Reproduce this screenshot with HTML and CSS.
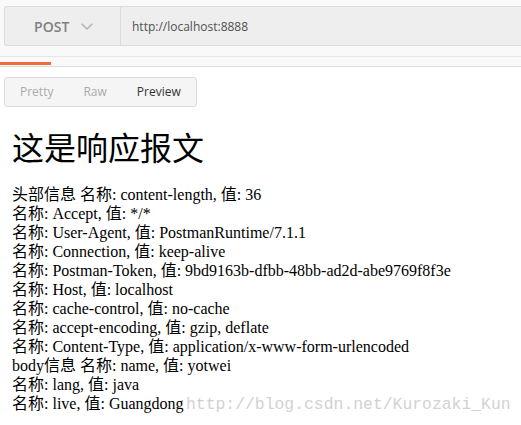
FILE: index.html
```html
<!DOCTYPE html>
<html lang="zh">
<head>
<meta charset="utf-8">
<title>Postman Preview</title>
<link rel="stylesheet" href="styles.css">
</head>
<body>
<div class="app">
  <div class="topbar">
    <div class="reqbar">
      <div class="method">
        <span class="method-name">POST</span>
        <svg class="chev" width="12" height="7" viewBox="0 0 12 7"><path d="M0.7 0.7 L6 6 L11.3 0.7" fill="none" stroke="#b0b0b0" stroke-width="1.3"/></svg>
      </div>
      <div class="url">http://localhost:8888</div>
    </div>
  </div>
  <div class="subbar"></div>
  <div class="tabstrip"><div class="active-line"></div></div>
  <div class="viewtabs">
    <span class="vt">Pretty</span>
    <span class="vt">Raw</span>
    <span class="vt vt-on">Preview</span>
  </div>
  <div class="preview">
    <h1 class="title">这是响应报文</h1>
    <div class="lines">
      <div>头部信息 名称: content-length, 值: 36</div>
      <div>名称: Accept, 值: */*</div>
      <div>名称: User-Agent, 值: PostmanRuntime/7.1.1</div>
      <div>名称: Connection, 值: keep-alive</div>
      <div>名称: Postman-Token, 值: 9bd9163b-dfbb-48bb-ad2d-abe9769f8f3e</div>
      <div>名称: Host, 值: localhost</div>
      <div>名称: cache-control, 值: no-cache</div>
      <div>名称: accept-encoding, 值: gzip, deflate</div>
      <div>名称: Content-Type, 值: application/x-www-form-urlencoded</div>
      <div>body信息 名称: name, 值: yotwei</div>
      <div>名称: lang, 值: java</div>
      <div>名称: live, 值: Guangdong</div>
    </div>
  </div>
  <div class="watermark">http://blog.csdn.net/Kurozaki_Kun</div>
</div>
</body>
</html>
```

FILE: styles.css
```css
html, body {
  margin: 0;
  padding: 0;
  background: #fff;
}
.app {
  position: relative;
  width: 521px;
  height: 425px;
  overflow: hidden;
}
.topbar {
  background: #f9f9f9;
  padding: 6px 0 0 4px;
}
.reqbar {
  display: flex;
  height: 38px;
  border: 1px solid #dcdcdc;
  border-right: none;
  border-radius: 3px 0 0 3px;
  background: #eeeeee;
}
.method {
  border-right: 1px solid #dcdcdc;
  display: flex;
  align-items: center;
  padding-left: 29px;
  box-sizing: border-box;
  width: 116px;
}
.method-name {
  font-family: "Open Sans", sans-serif;
  font-size: 14px;
  font-weight: 600;
  color: #808080;
  letter-spacing: 0.1px;
}
.chev {
  margin-left: 11px;
  margin-top: 1px;
}
.url {
  display: flex;
  align-items: center;
  padding-left: 11px;
  font-family: "Open Sans", sans-serif;
  font-size: 12px;
  color: #505050;
}
.subbar {
  height: 10px;
  background: #f9f9f9;
  border-bottom: 1px solid #e6e6e6;
}
.tabstrip {
  box-sizing: border-box;
  height: 10px;
  padding-top: 5px;
  background: #f9f9f9;
  border-bottom: 1px solid #dcdcdc;
}
.active-line {
  width: 51px;
  height: 3px;
  background: #f26b3a;
}
.viewtabs {
  display: flex;
  width: max-content;
  margin: 10px 0 0 4px;
  border: 1px solid #dcdcdc;
  border-radius: 3px;
  background: #f5f5f5;
  font-family: "Open Sans", sans-serif;
  font-size: 12px;
}
.vt {
  padding: 0 15px;
  line-height: 28px;
  color: #ababab;
}
.vt-on {
  color: #333333;
}
.preview {
  padding-left: 12px;
  font-family: "Liberation Serif", "Noto Sans CJK SC", serif;
  color: #000;
}
.title {
  margin: 24px 0 17px;
  font-size: 32px;
  line-height: 37px;
  font-weight: 400;
}
.lines {
  font-size: 16px;
  line-height: 19px;
}
.watermark {
  position: absolute;
  left: 186px;
  top: 395px;
  font-family: "Liberation Mono", monospace;
  font-size: 16.4px;
  line-height: 20px;
  color: #d2d2d2;
  white-space: nowrap;
}
```
